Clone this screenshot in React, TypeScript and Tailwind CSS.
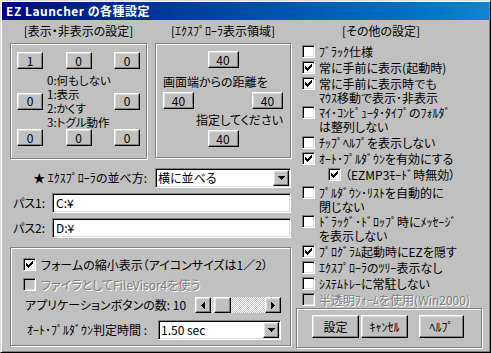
const raised =
  'border border-t-white border-l-white border-r-black border-b-black shadow-[inset_-1px_-1px_0_#808080,inset_1px_1px_0_#dfdfdf] bg-[#c0c0c0]';
const sunken =
  'border border-t-[#808080] border-l-[#808080] border-r-white border-b-white shadow-[inset_1px_1px_0_#000,inset_-1px_-1px_0_#dfdfdf]';
const etched = 'border border-[#808080] shadow-[inset_1px_1px_0_#fff,1px_1px_0_#fff]';
const grayText = 'text-[#808080] [text-shadow:1px_1px_0_#fff]';

const Btn = ({ label, className = '' }: { label: string; className?: string }) => (
  <div className={`flex items-center justify-center ${raised} ${className}`}>{label}</div>
);

const checkPixels = [
  [6, 0, 1],
  [5, 1, 2],
  [0, 2, 1],
  [4, 2, 3],
  [0, 3, 2],
  [3, 3, 3],
  [0, 4, 5],
  [1, 5, 3],
  [2, 6, 1],
];

const CheckBox = ({ checked = false, disabled = false }: { checked?: boolean; disabled?: boolean }) => (
  <span
    className={`flex h-[13px] w-[13px] shrink-0 items-center justify-center ${sunken} ${
      disabled ? 'bg-[#c0c0c0]' : 'bg-white'
    }`}
  >
    {checked && (
      <svg width="7" height="7" viewBox="0 0 7 7" shapeRendering="crispEdges">
        {checkPixels.map(([x, y, w], i) => (
          <rect key={i} x={x} y={y} width={w} height={1} fill="#000" />
        ))}
      </svg>
    )}
  </span>
);

const DownArrow = () => (
  <svg width="7" height="4" viewBox="0 0 7 4" shapeRendering="crispEdges">
    <path d="M0 0h7v1h-1v1h-1v1h-1v1h-1v-1h-1v-1h-1v-1h-1z" fill="#000" />
  </svg>
);

const Select = ({ value, className = '' }: { value: string; className?: string }) => (
  <div className={`flex items-center bg-white ${sunken} ${className}`}>
    <span className="flex-1 pl-[2px] leading-[14px] whitespace-nowrap">{value}</span>
    <span className={`mr-[1px] flex h-[16px] w-[16px] items-center justify-center ${raised}`}>
      <DownArrow />
    </span>
  </div>
);

// label text may hold a "\n" where the original control wraps
const Option = ({
  label,
  checked = false,
  disabled = false,
  className = '',
}: {
  label: string;
  checked?: boolean;
  disabled?: boolean;
  className?: string;
}) => (
  <div className={`flex items-start gap-[4px] ${className}`}>
    <CheckBox checked={checked} disabled={disabled} />
    <div className={`leading-[14px] whitespace-pre-line ${disabled ? grayText : ''}`}>{label}</div>
  </div>
);

export default function App() {
  const options = [
    { label: 'ﾌﾞﾗｯｸ仕様', className: 'h-[15px]' },
    { label: '常に手前に表示(起動時)', checked: true, className: 'h-[15px]' },
    { label: '常に手前に表示時でも\nﾏｳｽ移動で表示･非表示', checked: true, className: 'h-[28px]' },
    { label: 'ﾏｲ･ｺﾝﾋﾟｭｰﾀ･ﾀｲﾌﾟのﾌｫﾙﾀﾞ\nは整列しない', className: 'h-[29px]' },
    { label: 'ﾁｯﾌﾟﾍﾙﾌﾟを表示しない', className: 'h-[15px]' },
    { label: 'ｵｰﾄ･ﾌﾟﾙﾀﾞｳﾝを有効にする', checked: true, className: 'h-[15px]' },
    { label: '（EZMP3ﾓｰﾄﾞ時無効）', checked: true, className: 'h-[15px] ml-[26px]' },
    { label: 'ﾌﾟﾙﾀﾞｳﾝ･ﾘｽﾄを自動的に\n閉じない', className: 'h-[28px] mt-[2px]' },
    { label: 'ﾄﾞﾗｯｸﾞ･ﾄﾞﾛｯﾌﾟ時にﾒｯｾｰｼﾞ\nを表示しない', className: 'h-[29px]' },
    { label: 'ﾌﾟﾛｸﾞﾗﾑ起動時にEZを隠す', checked: true, className: 'h-[15px]' },
    { label: 'ｴｸｽﾌﾟﾛｰﾗのﾂﾘｰ表示なし', className: 'h-[15px]' },
    { label: 'ｼｽﾃﾑﾄﾚｰに常駐しない', className: 'h-[15px]' },
    { label: '半透明ﾌｫｰﾑを使用(Win2000)', disabled: true, className: 'h-[15px]' },
  ];

  return (
    <div className="flex h-[353px] w-[491px] flex-col border border-t-[#dfdfdf] border-l-[#dfdfdf] border-r-black border-b-black bg-[#c0c0c0] p-[1px] font-['Noto_Sans_CJK_JP',sans-serif] text-[12px] leading-[14px] text-black shadow-[inset_1px_1px_0_#fff,inset_-1px_-1px_0_#808080] [font-feature-settings:'palt']">
      <div className="flex h-[18px] items-center bg-linear-to-r from-[#000080] to-[#1084d0] pl-[4px] text-[12px] font-bold tracking-[0.5px] text-white">
        EZ Launcher の各種設定
      </div>

      <div className="flex flex-1 gap-[5px] pb-[3px] pl-[8px]">
        {/* left column */}
        <div className="flex w-[281px] flex-col">
          <div className="flex gap-[8px]">
            <div className="w-[137px]">
              <div className="h-[23px] pt-[4px] text-center">[表示・非表示の設定]</div>
              <div className={`${etched} h-[116px] px-[6px] pt-[8px]`}>
                <div className="flex justify-between">
                  <Btn label="1" className="h-[17px] w-[26px]" />
                  <Btn label="0" className="h-[17px] w-[26px]" />
                  <Btn label="0" className="h-[17px] w-[26px]" />
                </div>
                <div className="mt-[4px] flex items-center">
                  <Btn label="0" className="h-[17px] w-[26px] shrink-0" />
                  <div className="ml-[4px] flex-1 text-[11.5px] leading-[14px] whitespace-pre-line">
                    {'0:何もしない\n1:表示\n2:かくす\n3:トグル動作'}
                  </div>
                  <Btn label="0" className="h-[17px] w-[26px] shrink-0" />
                </div>
                <div className="flex justify-between">
                  <Btn label="0" className="h-[17px] w-[26px]" />
                  <Btn label="0" className="h-[17px] w-[26px]" />
                  <Btn label="0" className="h-[17px] w-[26px]" />
                </div>
              </div>
            </div>

            <div className="w-[136px]">
              <div className="h-[23px] pt-[4px] text-center">[ｴｸｽﾌﾟﾛｰﾗ表示領域]</div>
              <div className={`${etched} flex h-[115px] flex-col px-[7px] pt-[7px]`}>
                <Btn label="40" className="h-[17px] w-[31px] self-center" />
                <div className="mt-[7px] whitespace-nowrap">画面端からの距離を</div>
                <div className="mt-[3px] flex justify-between">
                  <Btn label="40" className="h-[17px] w-[31px]" />
                  <Btn label="40" className="h-[17px] w-[31px]" />
                </div>
                <div className="mt-[4px] text-right whitespace-nowrap">指定してください</div>
                <Btn label="40" className="mt-[3px] h-[17px] w-[31px] self-center" />
              </div>
            </div>
          </div>

          <div className="mt-[9px] flex h-[20px] items-center gap-[8px]">
            <div className="w-[137px] text-right whitespace-nowrap">★ ｴｸｽﾌﾟﾛｰﾗの並べ方:</div>
            <Select value="横に並べる" className="h-[20px] w-[136px]" />
          </div>

          <div className="mt-[5px] flex h-[20px] items-center">
            <div className="w-[42px] pl-[3px]">パス1:</div>
            <div className={`flex h-[20px] flex-1 items-center bg-white pl-[3px] ${sunken}`}>C:¥</div>
          </div>
          <div className="mt-[5px] flex h-[20px] items-center">
            <div className="w-[42px] pl-[3px]">パス2:</div>
            <div className={`flex h-[20px] flex-1 items-center bg-white pl-[3px] ${sunken}`}>D:¥</div>
          </div>

          <div className={`${etched} mt-[9px] flex h-[99px] flex-col pt-[10px] pl-[12px]`}>
            <div className="flex h-[13px] items-center gap-[5px] whitespace-nowrap">
              <CheckBox checked />
              <span>フォームの縮小表示（アイコンサイズは1／2）</span>
            </div>
            <div className="mt-[7px] flex h-[13px] items-center gap-[5px] whitespace-nowrap">
              <CheckBox disabled />
              <span className={grayText}>ファイラとしてFileVisor4を使う</span>
            </div>
            <div className="mt-[6px] flex h-[16px] items-center">
              <div className="w-[172px] pl-[2px] whitespace-nowrap">アプリケーションボタンの数: 10</div>
              <div className="flex h-[16px] w-[86px]">
                <span className={`flex h-[16px] w-[16px] items-center justify-center ${raised}`}>
                  <svg width="4" height="7" viewBox="0 0 4 7" shapeRendering="crispEdges">
                    <path d="M3 0h1v7h-1v-1h-1v-1h-1v-1h-1v-1h1v-1h1v-1h1z" fill="#000" />
                  </svg>
                </span>
                <div className="flex flex-1 bg-[repeating-conic-gradient(#c0c0c0_0_25%,#fff_0_50%)] [background-size:2px_2px]">
                  <span className={`ml-[3px] h-[16px] w-[17px] ${raised}`} />
                </div>
                <span className={`flex h-[16px] w-[16px] items-center justify-center ${raised}`}>
                  <svg width="4" height="7" viewBox="0 0 4 7" shapeRendering="crispEdges">
                    <path d="M0 0h1v1h1v1h1v1h1v1h-1v1h-1v1h-1v1h-1z" fill="#000" />
                  </svg>
                </span>
              </div>
            </div>
            <div className="mt-[7px] flex h-[20px] items-center">
              <div className="w-[135px] pl-[4px] whitespace-nowrap">ｵｰﾄ･ﾌﾟﾙﾀﾞｳﾝ判定時間 :</div>
              <Select value="1.50 sec" className="h-[20px] w-[123px]" />
            </div>
          </div>
        </div>

        {/* right column */}
        <div className="flex w-[186px] flex-col">
          <div className="h-[23px] pt-[4px] pr-[16px] text-center">[その他の設定]</div>
          <div className="mt-[2px] flex flex-col gap-[1px] pl-[6px]">
            {options.map((o, i) => (
              <Option key={i} {...o} />
            ))}
          </div>
          <div className={`${etched} mt-auto flex h-[40px] shrink-0 items-start pt-[6px] pl-[15px]`}>
            <Btn label="設定" className="h-[23px] w-[47px]" />
            <Btn label="ｷｬﾝｾﾙ" className="ml-[2px] h-[23px] w-[47px]" />
            <Btn label="ﾍﾙﾌﾟ" className="ml-[11px] h-[23px] w-[45px]" />
          </div>
        </div>
      </div>
    </div>
  );
}
